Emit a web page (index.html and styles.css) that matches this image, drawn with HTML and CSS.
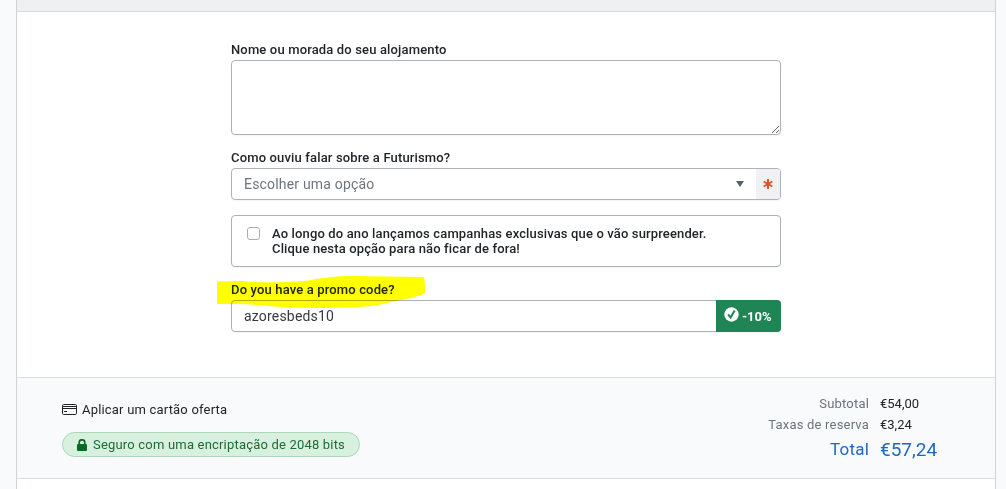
FILE: index.html
```html
<!DOCTYPE html>
<html lang="pt">
  <head>
    <meta charset="UTF-8" />
    <meta name="viewport" content="width=device-width, initial-scale=1.0" />
    <title>Reserva</title>
    <link rel="stylesheet" href="styles.css">
  </head>
  <body>
    <div class="panel">
      <div class="panel-header"></div>

      <form class="booking-form">
        <div class="field">
          <label class="field-label" for="address">Nome ou morada do seu alojamento</label>
          <textarea class="control textarea" id="address"></textarea>
        </div>

        <div class="field">
          <span class="field-label">Como ouviu falar sobre a Futurismo?</span>
          <div class="control select">
            <span class="select-value">Escolher uma opção</span>
            <svg class="caret" width="8" height="6" viewBox="0 0 8 6"><path d="M0 0h8L4 6z" /></svg>
            <span class="required">
              <svg width="10" height="10" viewBox="0 0 10 10"><path d="M5 0v10M.6 2.5l8.8 5M9.4 2.5l-8.8 5" /></svg>
            </span>
          </div>
        </div>

        <label class="control newsletter">
          <input class="checkbox" type="checkbox" />
          <span>Ao longo do ano lançamos campanhas exclusivas que o vão surpreender.<br />Clique nesta opção para não ficar de fora!</span>
        </label>

        <div class="field promo">
          <label class="field-label" for="promo">Do you have a promo code?</label>
          <div class="control promo-control">
            <input class="promo-input" id="promo" type="text" value="azoresbeds10" />
            <span class="discount">
              <svg width="15" height="15" viewBox="0 0 15 15">
                <circle cx="7.5" cy="7.5" r="7.2" />
                <path d="M4 7.300l2.600 3.200 4.100-7" />
              </svg>
              -10%
            </span>
          </div>
          <svg class="marker" width="208" height="33" viewBox="0 0 208 33">
            <path d="M0 5.500L25 5c16 2 40 1.500 62 0C105 2 118 0 135 0l71 1c2 1 2 6 2 16-8 5-22 6-34 9-14 4-26 5-42 5-30 2-65 1-90-2-14-1-28-1-42-1z" />
          </svg>
        </div>
      </form>

      <div class="summary">
        <div class="summary-left">
          <a class="gift-card">
            <svg width="15" height="11" viewBox="0 0 15 11">
              <rect x=".5" y=".5" width="14" height="10" rx="1.200" />
              <path d="M.5 2.500h14M.5 4.500h14M2 7.500h3" />
            </svg>
            Aplicar um cartão oferta
          </a>
          <div class="secure">
            <svg width="10" height="12" viewBox="0 0 10 12">
              <path class="shackle" d="M2.200 6V3.600a2.800 2.800 0 0 1 5.600 0V6" />
              <rect x="0" y="5" width="10" height="7" rx="1" />
            </svg>
            Seguro com uma encriptação de 2048 bits
          </div>
        </div>

        <dl class="totals">
          <dt>Subtotal</dt>
          <dd>€54,00</dd>
          <dt>Taxas de reserva</dt>
          <dd>€3,24</dd>
          <dt class="total">Total</dt>
          <dd class="total">€57,24</dd>
        </dl>
      </div>
    </div>
  </body>
</html>
```
FILE: styles.css
```css
* {
  box-sizing: border-box;
}

body {
  margin: 0;
  background-color: #f8fafc;
  color: #212529;
  font-family: Roboto, "Liberation Sans", sans-serif;
  font-size: 13px;
  line-height: 15px;
  letter-spacing: 0.19px;
}

svg {
  display: block;
  flex: none;
}

.panel {
  width: 980px;
  height: 489px;
  margin-left: 16px;
  background-color: #fff;
  border: solid #cfd4d8;
  border-width: 0 1px;
  overflow: hidden;
}

.panel-header {
  height: 12px;
  background-color: #eff0f2;
  border-bottom: 1px solid #d8dcdf;
}

.booking-form {
  display: flex;
  flex-direction: column;
  gap: 15px;
  width: 550px;
  height: 365px;
  margin-left: 214px;
  padding-top: 30px;
}

.field {
  display: flex;
  flex-direction: column;
  gap: 3px;
}

.field-label {
  font-weight: 500;
  letter-spacing: 0.15px;
}

.control {
  display: flex;
  width: 100%;
  background-color: #fff;
  border: 1px solid #adb1bb;
  border-radius: 4px;
  box-shadow: 0 1px 2px rgba(40, 60, 90, 0.06);
}

.textarea {
  height: 75px;
  outline: none;
}

.select {
  align-items: center;
  height: 32px;
  padding-left: 12px;
  overflow: hidden;
}

.select-value {
  flex: 1;
  color: #6c757d;
  font-size: 14px;
}

.caret {
  margin-right: 12px;
  fill: #56616c;
}

.required {
  display: flex;
  align-items: center;
  justify-content: center;
  width: 24px;
  height: 30px;
  background-color: #f0f1f3;
}

.required svg {
  fill: none;
  stroke: #d9532c;
  stroke-width: 1.9;
}

.newsletter {
  height: 52px;
  padding: 10px 15px;
  gap: 12px;
  font-weight: 500;
  letter-spacing: 0.14px;
}

.checkbox {
  appearance: none;
  flex: none;
  width: 13px;
  height: 13px;
  margin: 1px 0 0;
  border: 1px solid #a9afb7;
  border-radius: 3px;
}

.promo {
  position: relative;
}

.promo-control {
  height: 32px;
}

.promo-input {
  flex: 1;
  min-width: 0;
  padding: 0 12px;
  border: 0;
  outline: none;
  background: none;
  color: #343a40;
  font: inherit;
  font-size: 14px;
  letter-spacing: inherit;
}

.discount {
  display: flex;
  align-items: center;
  gap: 3px;
  width: 65px;
  margin: -1px;
  padding-left: 8px;
  background-color: #1f8554;
  border-radius: 0 4px 4px 0;
  color: #fff;
  font-weight: 700;
  letter-spacing: 0;
}

.discount svg {
  margin-bottom: 3px;
}

.discount circle {
  fill: #fff;
}

.discount path {
  fill: none;
  stroke: #1f8554;
  stroke-width: 2;
}

/* highlighter stroke over the promo label */
.marker {
  position: absolute;
  top: -6px;
  left: -14px;
  fill: #ffff00;
  mix-blend-mode: multiply;
  pointer-events: none;
}

.summary {
  display: flex;
  justify-content: space-between;
  height: 102px;
  padding: 0 58px 0 45px;
  background-color: #f8fafc;
  border: solid #d8dce1;
  border-width: 1px 0;
}

.summary-left {
  display: flex;
  flex-direction: column;
  align-items: flex-start;
  gap: 15px;
  padding-top: 24px;
}

.gift-card {
  display: flex;
  align-items: center;
  gap: 5px;
}

.gift-card svg {
  fill: none;
  stroke: #212529;
}

.secure {
  display: flex;
  align-items: center;
  gap: 6px;
  height: 25px;
  padding: 0 14px;
  background-color: #d8f1df;
  border: 1px solid #acd7b9;
  border-radius: 13px;
  color: #1c6b34;
}

.secure svg {
  fill: #0b6b22;
}

.secure .shackle {
  fill: none;
  stroke: #0b6b22;
  stroke-width: 1.7;
}

.totals {
  display: grid;
  grid-template-columns: auto 57px;
  grid-template-rows: 21px 21px 28px;
  align-items: center;
  column-gap: 11px;
  margin: 0;
  padding-top: 15px;
}

.totals dt {
  color: #6c757d;
  text-align: right;
}

.totals dd {
  margin: 0;
  letter-spacing: 0;
}

.totals .total {
  color: #2166c2;
}

.totals dt.total {
  font-size: 17px;
}

.totals dd.total {
  font-size: 19px;
}
```
